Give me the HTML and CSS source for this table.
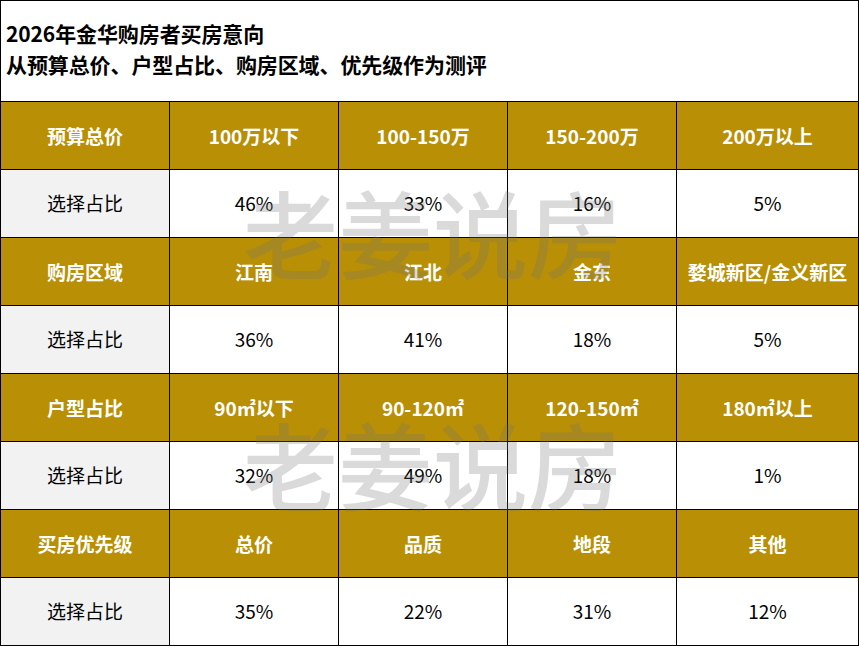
FILE: index.html
```html
<!DOCTYPE html>
<html lang="zh-CN">
<head>
<meta charset="utf-8">
<title>2026年金华购房者买房意向</title>
<link rel="stylesheet" href="styles.css">
</head>
<body>
<div class="sheet">
  <div class="title">
    <div class="title-line">2026年金华购房者买房意向</div>
    <div class="title-line">从预算总价、户型占比、购房区域、优先级作为测评</div>
  </div>

  <div class="cell head">预算总价</div>
  <div class="cell head">100万以下</div>
  <div class="cell head">100-150万</div>
  <div class="cell head">150-200万</div>
  <div class="cell head">200万以上</div>
  <div class="cell label">选择占比</div>
  <div class="cell">46%</div>
  <div class="cell">33%</div>
  <div class="cell">16%</div>
  <div class="cell">5%</div>

  <div class="cell head">购房区域</div>
  <div class="cell head">江南</div>
  <div class="cell head">江北</div>
  <div class="cell head">金东</div>
  <div class="cell head">婺城新区/金义新区</div>
  <div class="cell label">选择占比</div>
  <div class="cell">36%</div>
  <div class="cell">41%</div>
  <div class="cell">18%</div>
  <div class="cell">5%</div>

  <div class="cell head">户型占比</div>
  <div class="cell head">90㎡以下</div>
  <div class="cell head">90-120㎡</div>
  <div class="cell head">120-150㎡</div>
  <div class="cell head">180㎡以上</div>
  <div class="cell label">选择占比</div>
  <div class="cell">32%</div>
  <div class="cell">49%</div>
  <div class="cell">18%</div>
  <div class="cell">1%</div>

  <div class="cell head">买房优先级</div>
  <div class="cell head">总价</div>
  <div class="cell head">品质</div>
  <div class="cell head">地段</div>
  <div class="cell head">其他</div>
  <div class="cell label">选择占比</div>
  <div class="cell">35%</div>
  <div class="cell">22%</div>
  <div class="cell">31%</div>
  <div class="cell">12%</div>

  <div class="watermark wm-top">老姜说房</div>
  <div class="watermark wm-bottom">老姜说房</div>
</div>
</body>
</html>
```

FILE: styles.css
```css
html, body {
  margin: 0;
  padding: 0;
  background: #ffffff;
}

body {
  font-family: "Noto Sans CJK SC", "Microsoft YaHei", "Noto Sans", sans-serif;
  color: #000;
}

.sheet {
  position: relative;
  width: 859px;
  height: 646px;
  box-sizing: border-box;
  background: #000;
  padding: 1px;
  display: grid;
  grid-template-columns: 168px 168px 168px 168px 181px;
  grid-template-rows: 100px repeat(8, 67px);
  gap: 1px;
  overflow: hidden;
}

.title {
  grid-column: 1 / -1;
  background: #fff;
  display: flex;
  flex-direction: column;
  justify-content: center;
  padding: 0 0 4px 5px;
  box-sizing: border-box;
}

.title-line {
  font-size: 21px;
  font-weight: 700;
  line-height: 31px;
  color: #000;
  letter-spacing: -0.1px;
}

.cell {
  background: #fff;
  display: flex;
  align-items: center;
  justify-content: center;
  font-size: 19px;
  line-height: 1;
  color: #000;
  white-space: nowrap;
  padding-bottom: 2px;
  box-sizing: border-box;
}

.cell.head {
  background: #b88f05;
  color: #fff;
  font-weight: 700;
  padding-bottom: 0;
}

.cell.label {
  background: #f2f2f2;
}

.watermark {
  position: absolute;
  left: 243px;
  font-size: 95px;
  line-height: 1;
  font-weight: 500;
  color: rgba(120, 120, 120, 0.27);
  pointer-events: none;
  white-space: nowrap;
}

.wm-top {
  top: 183px;
}

.wm-bottom {
  top: 415px;
}
```
